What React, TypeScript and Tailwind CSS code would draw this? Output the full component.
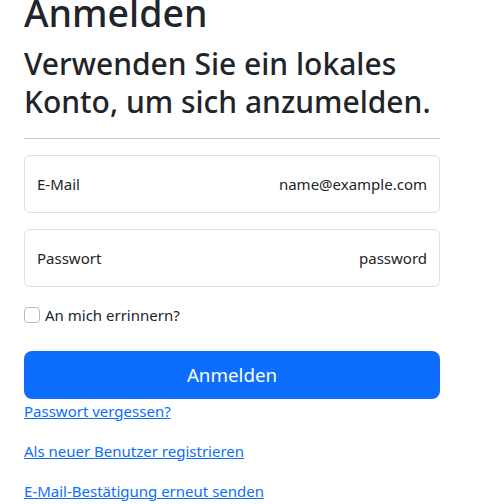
import React, { useState } from "react";

// Bootstrap-like login page (ASP.NET Identity)
export default function App() {
  const [remember, setRemember] = useState(false);

  return (
    <div
      className="min-h-screen bg-white text-[#212529] overflow-hidden"
      style={{ fontFamily: '"Segoe UI", "Noto Sans", "Liberation Sans", sans-serif' }}
    >
      <div className="w-[416px] ml-6 -mt-[11px]">
        <h1 className="text-[37.5px] leading-[48px] font-medium mb-2">Anmelden</h1>
        <section>
          <form>
            <h2 className="text-[30px] leading-[38.4px] font-medium mb-2">
              Verwenden Sie ein lokales Konto, um sich anzumelden.
            </h2>
            <hr className="border-0 border-t border-[#c8c9ca] mt-4 mb-4" />

            <div className="mb-4 h-[58px] border border-[#dee2e6] rounded-md flex items-center justify-between px-3 text-[15px]">
              <label className="text-[#212529]">E-Mail</label>
              <span className="text-[#212529]">name@example.com</span>
            </div>

            <div className="mb-4 h-[58px] border border-[#dee2e6] rounded-md flex items-center justify-between px-3 text-[15px]">
              <label className="text-[#212529]">Passwort</label>
              <span className="text-[#212529]">password</span>
            </div>

            <div className="mb-6 h-6 flex items-center gap-[5px] text-[15px]">
              <input
                type="checkbox"
                checked={remember}
                onChange={(e) => setRemember(e.target.checked)}
                className="appearance-none w-4 h-4 border border-[#b8bcc0] rounded-[4px] bg-white shrink-0"
              />
              <label>An mich errinnern?</label>
            </div>

            <button
              type="button"
              className="w-full h-12 bg-[#0d6efd] text-white text-[18.75px] rounded-lg"
            >
              Anmelden
            </button>

            <div className="text-[15px] leading-6">
              <p className="mb-4">
                <a href="#" className="text-[#0d6efd] underline">Passwort vergessen?</a>
              </p>
              <p className="mb-4">
                <a href="#" className="text-[#0d6efd] underline">Als neuer Benutzer registrieren</a>
              </p>
              <p className="mb-4">
                <a href="#" className="text-[#0d6efd] underline">E-Mail-Bestätigung erneut senden</a>
              </p>
            </div>
          </form>
        </section>
      </div>
    </div>
  );
}
